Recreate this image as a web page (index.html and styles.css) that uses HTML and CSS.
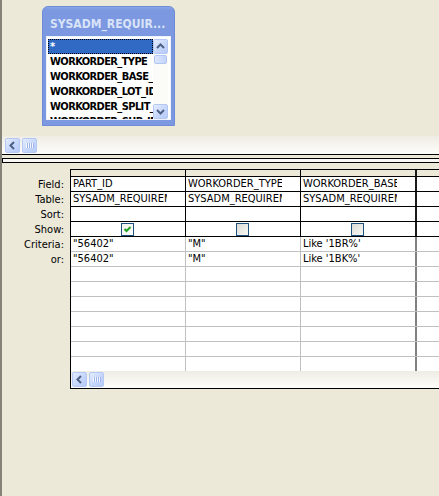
FILE: index.html
```html
<!DOCTYPE html>
<html>
<head>
<meta charset="utf-8">
<link rel="stylesheet" href="styles.css">
</head>
<body>
<div class="app">
  <div class="canvas">
    <div class="tbox">
      <div class="ttitle">SYSADM_REQUIR...</div>
      <div class="tlist">
        <div class="items">
          <div class="item sel">*</div>
          <div class="item">WORKORDER_TYPE</div>
          <div class="item">WORKORDER_BASE_ID</div>
          <div class="item">WORKORDER_LOT_ID</div>
          <div class="item">WORKORDER_SPLIT_ID</div>
          <div class="item">WORKORDER_SUB_ID</div>
        </div>
        <div class="vscroll">
          <div class="sb">
            <svg width="13" height="13" viewBox="0 0 13 13"><polyline points="3,8 6.5,4.5 10,8" fill="none" stroke="#4d6185" stroke-width="2"/></svg>
          </div>
          <div class="vtrack"><div class="vthumb"></div></div>
          <div class="sb">
            <svg width="13" height="13" viewBox="0 0 13 13"><polyline points="3,5 6.5,8.5 10,5" fill="none" stroke="#4d6185" stroke-width="2"/></svg>
          </div>
        </div>
      </div>
    </div>
  </div>
  <div class="hscroll top">
    <div class="sb">
      <svg width="13" height="13" viewBox="0 0 13 13"><polyline points="8,3 4.5,6.5 8,10" fill="none" stroke="#4d6185" stroke-width="2"/></svg>
    </div>
    <div class="sb thumb">
      <svg width="13" height="13" viewBox="0 0 13 13"><g stroke="#f4f7fe" stroke-width="1"><line x1="3.5" y1="4" x2="3.5" y2="9"/><line x1="5.5" y1="4" x2="5.5" y2="9"/><line x1="7.5" y1="4" x2="7.5" y2="9"/><line x1="9.5" y1="4" x2="9.5" y2="9"/></g><g stroke="#9db4ec" stroke-width="1"><line x1="4.5" y1="4" x2="4.5" y2="9"/><line x1="6.5" y1="4" x2="6.5" y2="9"/><line x1="8.5" y1="4" x2="8.5" y2="9"/><line x1="10.5" y1="4" x2="10.5" y2="9"/></g></svg>
    </div>
  </div>
  <div class="sepline"></div>
  <div class="splitter"></div>
  <div class="lower">
    <div class="labels">
      <div class="lbl">Field:</div>
      <div class="lbl">Table:</div>
      <div class="lbl">Sort:</div>
      <div class="lbl">Show:</div>
      <div class="lbl">Criteria:</div>
      <div class="lbl">or:</div>
    </div>
    <div class="grid">
      <div class="ghead">
        <div class="c"></div><div class="c"></div><div class="c c3"></div><div class="c c4"></div>
      </div>
      <div class="gbody">
        <div class="grow">
          <div class="c"><div class="t combo">PART_ID</div></div>
          <div class="c"><div class="t combo">WORKORDER_TYPE</div></div>
          <div class="c c3"><div class="t combo">WORKORDER_BASE_ID</div></div>
          <div class="c c4"></div>
        </div>
        <div class="grow">
          <div class="c"><div class="t combo">SYSADM_REQUIREMENT</div></div>
          <div class="c"><div class="t combo">SYSADM_REQUIREMENT</div></div>
          <div class="c c3"><div class="t combo">SYSADM_REQUIREMENT</div></div>
          <div class="c c4"></div>
        </div>
        <div class="grow">
          <div class="c"></div><div class="c"></div><div class="c c3"></div><div class="c c4"></div>
        </div>
        <div class="grow">
          <div class="c cbc"><div class="cb on"><svg width="11" height="11" viewBox="0 0 11 11"><polyline points="2.5,5 4.5,7 8.5,3" fill="none" stroke="#21a121" stroke-width="2"/></svg></div></div>
          <div class="c cbc"><div class="cb"></div></div>
          <div class="c c3 cbc"><div class="cb"></div></div>
          <div class="c c4"></div>
        </div>
        <div class="grow lo">
          <div class="c"><div class="t">&quot;56402&quot;</div></div>
          <div class="c"><div class="t">&quot;M&quot;</div></div>
          <div class="c c3"><div class="t">Like '1BR%'</div></div>
          <div class="c c4"></div>
        </div>
        <div class="grow lo">
          <div class="c"><div class="t">&quot;56402&quot;</div></div>
          <div class="c"><div class="t">&quot;M&quot;</div></div>
          <div class="c c3"><div class="t">Like '1BK%'</div></div>
          <div class="c c4"></div>
        </div>
        <div class="grow lo"><div class="c"></div><div class="c"></div><div class="c c3"></div><div class="c c4"></div></div>
        <div class="grow lo"><div class="c"></div><div class="c"></div><div class="c c3"></div><div class="c c4"></div></div>
        <div class="grow lo"><div class="c"></div><div class="c"></div><div class="c c3"></div><div class="c c4"></div></div>
        <div class="grow lo"><div class="c"></div><div class="c"></div><div class="c c3"></div><div class="c c4"></div></div>
        <div class="grow lo"><div class="c"></div><div class="c"></div><div class="c c3"></div><div class="c c4"></div></div>
        <div class="grow lo"><div class="c"></div><div class="c"></div><div class="c c3"></div><div class="c c4"></div></div>
        <div class="grow lo"><div class="c"></div><div class="c"></div><div class="c c3"></div><div class="c c4"></div></div>
      </div>
      <div class="hscroll gscroll">
        <div class="sb">
          <svg width="13" height="13" viewBox="0 0 13 13"><polyline points="8,3 4.5,6.5 8,10" fill="none" stroke="#4d6185" stroke-width="2"/></svg>
        </div>
        <div class="sb thumb">
          <svg width="13" height="13" viewBox="0 0 13 13"><g stroke="#f4f7fe" stroke-width="1"><line x1="3.5" y1="4" x2="3.5" y2="9"/><line x1="5.5" y1="4" x2="5.5" y2="9"/><line x1="7.5" y1="4" x2="7.5" y2="9"/><line x1="9.5" y1="4" x2="9.5" y2="9"/></g><g stroke="#9db4ec" stroke-width="1"><line x1="4.5" y1="4" x2="4.5" y2="9"/><line x1="6.5" y1="4" x2="6.5" y2="9"/><line x1="8.5" y1="4" x2="8.5" y2="9"/><line x1="10.5" y1="4" x2="10.5" y2="9"/></g></svg>
        </div>
      </div>
    </div>
  </div>
</div>
</body>
</html>
```

FILE: styles.css
```css
html, body {
  margin: 0;
  padding: 0;
}
body {
  width: 439px;
  height: 496px;
  overflow: hidden;
  background: #ECE9D8;
  font-family: "DejaVu Sans Condensed", "DejaVu Sans", sans-serif;
  font-stretch: condensed;
  font-size: 11px;
  color: #000;
}
.app {
  height: 496px;
  box-sizing: border-box;
  border-left: 2px solid #858378;
  display: flex;
  flex-direction: column;
  overflow: hidden;
}
.canvas {
  height: 136px;
  box-sizing: border-box;
  padding: 6px 0 0 40px;
  flex: none;
}
.tbox {
  width: 133px;
  height: 120px;
  box-sizing: border-box;
  background: linear-gradient(#8aa5e8 0px, #7c98e0 3px, #7c98e0 100%);
  border: 1px solid #6d8bd9;
  border-radius: 6px 6px 0 0;
  padding: 0 3px 5px 3px;
  display: flex;
  flex-direction: column;
}
.ttitle {
  height: 29px;
  box-sizing: border-box;
  padding: 5px 0 0 4px;
  line-height: 24px;
  color: #d8e3f8;
  font-weight: bold;
  font-size: 12px;
  white-space: nowrap;
  overflow: hidden;
}
.tlist {
  height: 84px;
  box-sizing: border-box;
  background: #fff;
  border: 1px solid #eef2fc;
  padding: 2px 2px 0 1px;
  display: flex;
  overflow: hidden;
}
.items {
  width: 105px;
  flex: none;
  overflow: hidden;
}
.item {
  height: 15px;
  line-height: 15px;
  box-sizing: border-box;
  padding-left: 2px;
  font-weight: bold;
  font-size: 11px;
  letter-spacing: -0.6px;
  white-space: nowrap;
  overflow: hidden;
}
.item.sel {
  background: #316AC5;
  color: #fff;
  border: 1px dotted #000;
  line-height: 13px;
  padding-left: 1px;
}
.vscroll {
  width: 15px;
  flex: none;
  display: flex;
  flex-direction: column;
}
.vtrack {
  flex: 1;
  background: #fbfbf8;
  padding-top: 1px;
}
.vthumb {
  height: 7px;
  margin: 0 1px;
  border: 1px solid #b1c6f4;
  border-radius: 2px;
  background: linear-gradient(90deg, #dde7fd, #c3d4fa);
}
.sb {
  width: 15px;
  height: 15px;
  box-sizing: border-box;
  border: 1px solid #b4c8f6;
  border-radius: 2px;
  background: linear-gradient(135deg, #e4ecfe 0%, #c4d5fb 60%, #b7cbf8 100%);
  display: flex;
  align-items: center;
  justify-content: center;
  flex: none;
}
.sb svg {
  display: block;
}
.hscroll {
  display: flex;
  align-items: center;
  background: linear-gradient(#eeece4, #fdfdfb);
}
.hscroll.top {
  height: 18px;
  padding-left: 3px;
  flex: none;
}
.hscroll .thumb {
  margin-left: 2px;
}
.sepline {
  height: 0;
  border-top: 1px solid #000;
  flex: none;
}
.splitter {
  margin: 3px 0 6px 0;
  height: 3px;
  border-top: 1px solid #000;
  border-bottom: 1px solid #000;
  border-left: 1px solid #000;
  background: #f8f7f2;
  flex: none;
}
.lower {
  display: flex;
  flex: none;
}
.labels {
  width: 68px;
  flex: none;
  box-sizing: border-box;
  padding-top: 8px;
}
.lbl {
  height: 15px;
  line-height: 15px;
  text-align: right;
  padding-right: 6px;
}
.grid {
  flex: 1;
  min-width: 0;
  overflow: hidden;
  border-left: 1px solid #000;
  display: flex;
  flex-direction: column;
}
.ghead {
  height: 6px;
  border-top: 1px solid #000;
  border-bottom: 1px solid #000;
  display: flex;
}
.gbody {
  height: 194px;
  overflow: hidden;
  background: #fff;
}
.grow {
  height: 14px;
  border-bottom: 1px solid #000;
  display: flex;
}
.grow.lo {
  border-bottom-color: #c0c0c0;
}
.c {
  width: 114px;
  border-right: 1px solid #000;
  flex: none;
  overflow: hidden;
}
.c.c3 {
  border-right: 2px solid #1a1a1a;
}
.c.c4 {
  flex: 1;
  border-right: 0;
}
.grow.lo .c {
  border-right-color: #c0c0c0;
}
.grow.lo .c.c3 {
  border-right-color: #808080;
}
.t {
  padding-left: 2px;
  line-height: 14px;
  white-space: nowrap;
  overflow: hidden;
}
.t.combo {
  width: 94px;
}
.cbc {
  display: flex;
  align-items: center;
  justify-content: center;
}
.cb {
  width: 13px;
  height: 13px;
  box-sizing: border-box;
  border: 1px solid #1c5180;
  background: linear-gradient(135deg, #dcdcd7, #f7f7f4);
  margin-right: 1px;
}
.cb.on {
  background: linear-gradient(135deg, #f2f2ee, #fff);
}
.gscroll {
  height: 17px;
  padding-left: 1px;
  border-bottom: 1px solid #000;
}
```
